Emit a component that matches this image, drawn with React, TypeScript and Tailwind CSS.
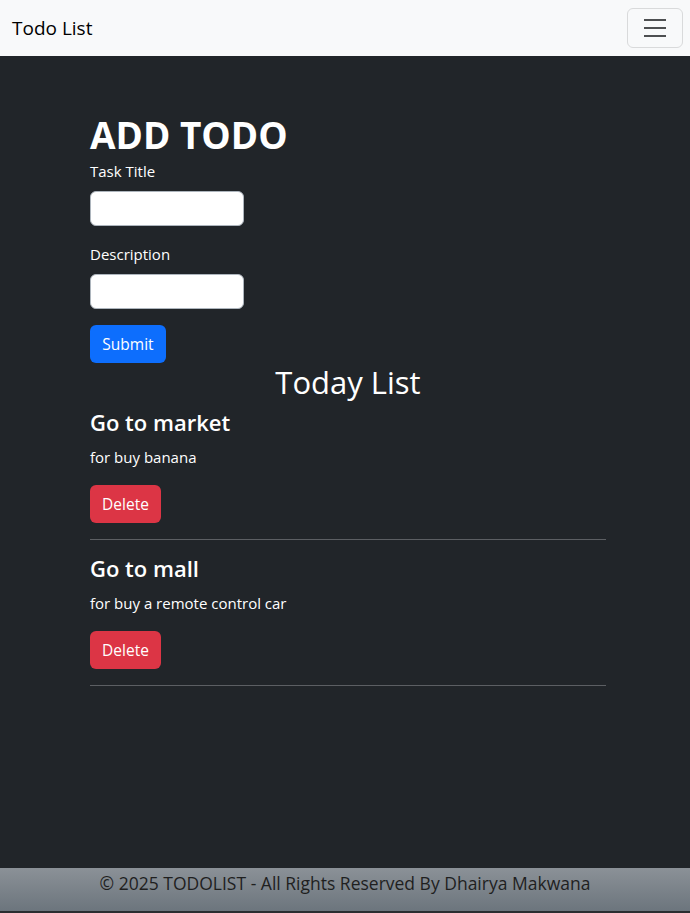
const todos = [
  { title: "Go to market", desc: "for buy banana" },
  { title: "Go to mall", desc: "for buy a remote control car" },
]

const App = () => {
  return (
    <div className="flex h-[913px] flex-col bg-[#212529] font-['Open_Sans',sans-serif] text-white">
      <nav className="flex h-[56px] items-center justify-between bg-[#f8f9fa] pl-[12px] pr-[7px]">
        <span className="text-[19px] text-black">Todo List</span>
        <button className="flex h-[40px] w-[56px] items-center justify-center rounded-[6px] border border-[#d9dadb]">
          <svg width="30" height="30" viewBox="0 0 30 30">
            <path d="M4 7h22M4 15h22M4 23h22" stroke="#4d4f51" strokeWidth="2" />
          </svg>
        </button>
      </nav>

      <main className="flex-1">
        <div className="ml-[90px] w-[516px] pt-[57px]">
          <h1 className="text-[37px] font-bold leading-[1.2]">ADD TODO</h1>
          <form className="mt-[2px]">
            <label className="block text-[15px] leading-[24px]">Task Title</label>
            <input className="mt-[8px] block h-[35px] w-[154px] rounded-[6px] border border-[#adb5bd] bg-white" />
            <label className="mt-[16px] block text-[15px] leading-[24px]">Description</label>
            <input className="mt-[8px] block h-[35px] w-[154px] rounded-[6px] border border-[#adb5bd] bg-white" />
            <button type="button" className="mt-[16px] h-[38px] w-[76px] rounded-[6px] bg-[#0d6efd] text-[15.5px]">
              Submit
            </button>
          </form>

          <h2 className="text-center text-[31px] font-medium leading-[38px]">Today List</h2>

          {todos.map((t, i) => (
            <div
              key={t.title}
              className={`border-b border-[#5c5f63] pb-[16px] ${i === 0 ? "pt-[8px]" : "pt-[15px]"}`}
            >
              <h4 className="text-[22px] font-semibold leading-[26px]">{t.title}</h4>
              <p className="mt-[10px] text-[15px] leading-[24px]">{t.desc}</p>
              <button className="mt-[16px] h-[38px] w-[71px] rounded-[6px] bg-[#dc3545] text-[15.5px]">
                Delete
              </button>
            </div>
          ))}
        </div>
      </main>

      <footer className="flex h-[43px] justify-center bg-gradient-to-b from-[#8b9197] to-[#6c757d] pt-[3px] text-[17.5px] leading-[24px] text-[#1f1f1f]">
        © 2025 TODOLIST - All Rights Reserved By Dhairya Makwana
      </footer>
      <div className="h-[2px] bg-[#2b2e31]" />
    </div>
  )
}

export default App
